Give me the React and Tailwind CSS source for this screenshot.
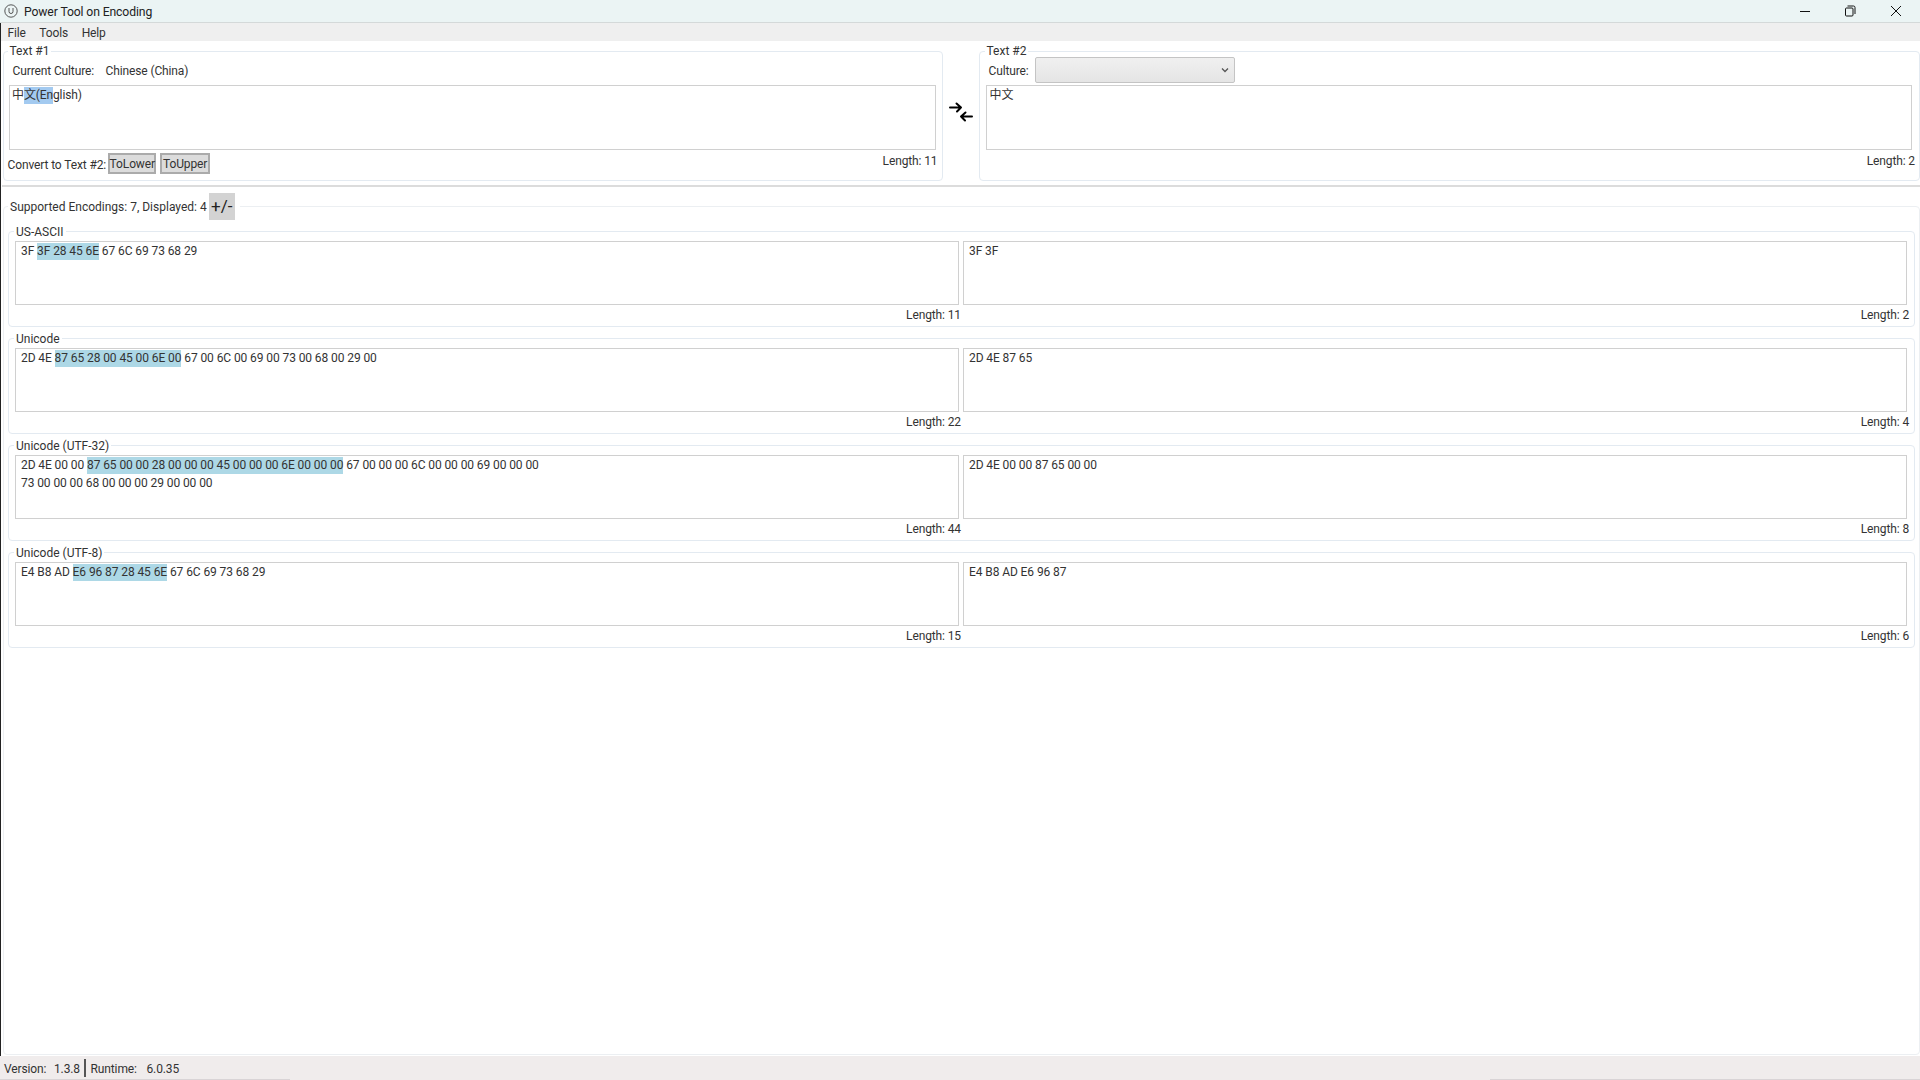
import React from "react";

function Group({ legend, className = "", legendClass = "ml-[4px] px-[2px]", children }) {
  return (
    <fieldset className={"min-w-0 rounded-[4px] border-[1.5px] border-[#e3eaf1] " + className}>
      <legend className={"text-[12px] leading-[16px] tracking-normal text-[#333] " + legendClass}>{legend}</legend>
      {children}
    </fieldset>
  );
}

function Box({ className = "", children }) {
  return (
    <div className={"border-[1.5px] border-[#d0d0d0] bg-white text-[12px] leading-[18px] text-[#333] " + className}>
      {children}
    </div>
  );
}

function Hl({ children }) {
  return <span className="inline-block h-[17px] bg-[#add8e6] leading-[17px]">{children}</span>;
}

function HexCol({ len, children }) {
  return (
    <div className="min-w-0">
      <Box className="h-[64px] overflow-hidden pl-[5px] tracking-[-0.09px]">
        <div className="whitespace-pre">{children}</div>
      </Box>
      <div className="-mr-[2px] mt-[2px] text-right text-[12px] leading-[16px] text-[#333]">Length: {len}</div>
    </div>
  );
}

function Encoding({ name, left, leftLen, right, rightLen }) {
  return (
    <Group legend={name} legendClass="ml-[5.5px] px-[2px]" className="h-[103px]">
      <div className="grid grid-cols-2 gap-x-[4px] pl-[6.5px] pr-[7px] pt-px">
        <HexCol len={leftLen}>{left}</HexCol>
        <HexCol len={rightLen}>{right}</HexCol>
      </div>
    </Group>
  );
}

function SwapIcon() {
  return (
    <svg width="24" height="22" viewBox="0 0 24 22" fill="none" stroke="#000" strokeWidth="2" strokeLinecap="round" strokeLinejoin="round">
      <path d="M1 5.5h11M7.5 1.5l4.5 4-4 4" />
      <path d="M23 14.5H12M16.5 10.5l-4.5 4 4 4" />
    </svg>
  );
}

export default function App() {
  return (
    <div className="flex h-[1080px] w-[1920px] flex-col overflow-hidden bg-white font-[Roboto,'Noto_Sans_CJK_SC',sans-serif] tracking-[-0.12px] text-[#333]">
      {/* Title bar */}
      <div className="flex h-[23px] shrink-0 items-center justify-between border-b border-[#d4d9d9] bg-[#ebf4f4] pl-[4px]">
        <div className="flex items-center gap-[6px]">
          <svg width="14" height="14" viewBox="0 0 14 14" fill="none" stroke="#444" strokeWidth="0.9">
            <circle cx="7" cy="7" r="6.2" />
            <path d="M5 4v3.5a2 2 0 0 0 4 0V4" />
          </svg>
          <span className="pt-px text-[12.2px] leading-[16px] text-[#222]">Power Tool on Encoding</span>
        </div>
        <div className="flex items-center">
          <svg width="12" height="12" viewBox="0 0 12 12" className="mr-[33px]" stroke="#111" fill="none" strokeWidth="1">
            <path d="M1 6.5h10" />
          </svg>
          <svg width="12" height="12" viewBox="0 0 12 12" className="mr-[34px]" stroke="#111" fill="none" strokeWidth="1">
            <rect x="1.5" y="3" width="7.5" height="8" rx="1" />
            <path d="M3.5 1h6a1.5 1.5 0 0 1 1.5 1.5V9" />
          </svg>
          <svg width="12" height="12" viewBox="0 0 12 12" className="mr-[18px]" stroke="#111" fill="none" strokeWidth="1">
            <path d="M1 1l10 10M11 1L1 11" />
          </svg>
        </div>
      </div>

      {/* Window body */}
      <div className="flex min-h-0 flex-1 flex-col border-l-[1.5px] border-[#222]">
        <div className="flex h-[18px] shrink-0 items-center gap-[13.5px] bg-[#efefef] pl-[6.5px] pt-px text-[12px] text-[#333]">
          <span>File</span>
          <span>Tools</span>
          <span>Help</span>
        </div>

        <div className="flex min-h-0 flex-1 flex-col">
          <div className="mt-[2px] flex h-[138px] shrink-0 pl-[1.5px]">
            <Group legend="Text #1" className="w-[940px]">
              <div className="flex h-[24px] items-center pl-[9px] text-[12px] leading-[16px]">
                <span className="w-[93px]">Current Culture:</span>
                <span>Chinese (China)</span>
              </div>
              <Box className="ml-[5px] mr-[5.5px] mt-[2px] h-[65px] border-[#9fc8f0] pl-[2.5px]">
                中<span className="inline-block h-[17px] bg-[#a3caf0] leading-[17px]">文(En</span>glish)
              </Box>
              <div className="mt-[3px] flex items-start justify-between pl-[4px] pr-[4px]">
                <div className="flex items-center text-[12px]">
                  <span className="mr-[1.5px] mt-[2px]">Convert to Text #2:</span>
                  <button className="mr-[4.5px] h-[21px] w-[48px] border-2 border-[#ababab] bg-[#dcdcdc] text-[12px] leading-[16px] text-[#333]">ToLower</button>
                  <button className="h-[21px] w-[50px] border-2 border-[#ababab] bg-[#dcdcdc] text-[12px] leading-[16px] text-[#333]">ToUpper</button>
                </div>
                <span className="text-[12px] leading-[16px]">Length: 11</span>
              </div>
            </Group>

            <div className="flex w-[36px] shrink-0 items-center justify-center pt-[2px]">
              <SwapIcon />
            </div>

            <Group legend="Text #2" legendClass="ml-[5px] px-[2px]" className="min-w-0 flex-1">
              <div className="-mt-px flex h-[25px] items-center pl-[9px] text-[12px]">
                <span className="w-[46px]">Culture:</span>
                <div className="-mt-[1px] flex h-[25.5px] w-[200px] items-center justify-end rounded-[2px] border-[1.5px] border-[#c4c4c4] bg-gradient-to-b from-[#f0f0f0] to-[#e5e5e5] pr-[4px]">
                  <svg width="10" height="10" viewBox="0 0 10 10" fill="none" stroke="#555" strokeWidth="1.3">
                    <path d="M2 3.5l3 3 3-3" />
                  </svg>
                </div>
              </div>
              <Box className="ml-[6px] mr-[7.5px] mt-[2px] h-[65px] pl-[3px]">中文</Box>
              <div className="mt-[3px] pr-[4px] text-right text-[12px] leading-[16px]">Length: 2</div>
            </Group>
          </div>

          <div className="ml-px mt-[3.5px] h-[2px] shrink-0 bg-[#dcdcdc]" />

          <Group
            className="mb-px ml-[1.5px] mt-[6px] min-h-0 flex-1 border-[#eceff2]"
            legendClass="ml-[4.5px] pl-[2px] pr-[5px]"
            legend={
              <span className="flex items-center">
                <span className="mt-px">Supported Encodings: 7, Displayed: 4</span>
                <span className="ml-[2px] flex h-[27px] w-[26px] items-center justify-center bg-[#d3d3d3] text-[17px] text-[#222]">+/-</span>
              </span>
            }
          >
            <div className="flex flex-col gap-[4px] px-[4px] pt-[4px]">
              <Encoding
                name="US-ASCII"
                left={<>3F <Hl>3F 28 45 6E</Hl> 67 6C 69 73 68 29</>}
                leftLen={11}
                right="3F 3F"
                rightLen={2}
              />
              <Encoding
                name="Unicode"
                left={<>2D 4E <Hl>87 65 28 00 45 00 6E 00</Hl> 67 00 6C 00 69 00 73 00 68 00 29 00</>}
                leftLen={22}
                right="2D 4E 87 65"
                rightLen={4}
              />
              <Encoding
                name="Unicode (UTF-32)"
                left={<>2D 4E 00 00 <Hl>87 65 00 00 28 00 00 00 45 00 00 00 6E 00 00 00</Hl> 67 00 00 00 6C 00 00 00 69 00 00 00<br />73 00 00 00 68 00 00 00 29 00 00 00</>}
                leftLen={44}
                right="2D 4E 00 00 87 65 00 00"
                rightLen={8}
              />
              <Encoding
                name="Unicode (UTF-8)"
                left={<>E4 B8 AD <Hl>E6 96 87 28 45 6E</Hl> 67 6C 69 73 68 29</>}
                leftLen={15}
                right="E4 B8 AD E6 96 87"
                rightLen={6}
              />
            </div>
          </Group>
        </div>
      </div>

      {/* Status bar */}
      <div className="flex h-[24px] shrink-0 flex-col bg-[#f0ecec]">
        <div className="flex flex-1 items-center pl-[4px] pt-[3px] text-[12px] text-[#333]">
          <span className="w-[50px]">Version:</span>
          <span className="w-[30px]">1.3.8</span>
          <span className="-mt-[3px] mr-[5px] h-[18px] w-[1.5px] bg-[#555]" />
          <span className="w-[56px]">Runtime:</span>
          <span>6.0.35</span>
        </div>
        <div className="flex h-px">
          <div className="w-[290px] bg-[#d9d4d6]" />
          <div className="flex-1" />
          <div className="w-[430px] bg-[#d9d4d6]" />
        </div>
      </div>
    </div>
  );
}
